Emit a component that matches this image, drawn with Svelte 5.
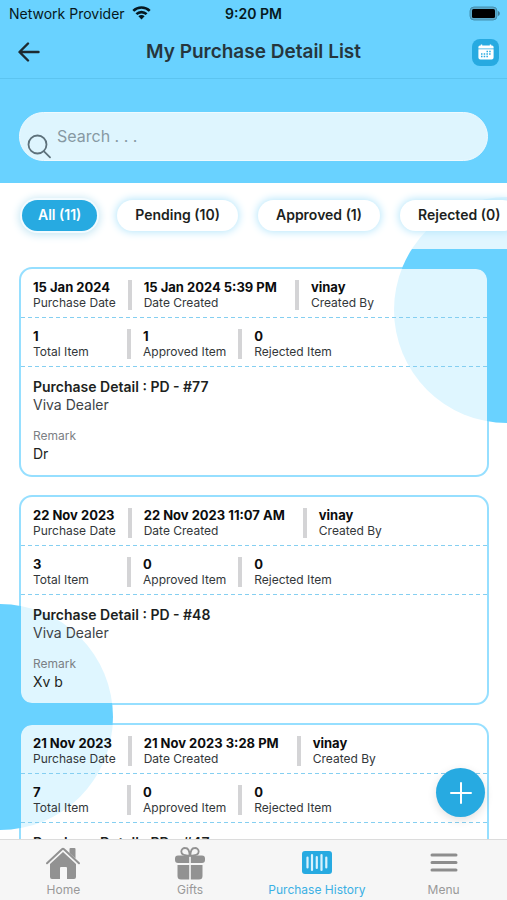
<script>
  const filters = ['All (11)', 'Pending (10)', 'Approved (1)', 'Rejected (0)'];
  const purchases = [
    { id: 77, date: '15 Jan 2024', created: '15 Jan 2024 5:39 PM', by: 'vinay', total: 1, approved: 1, rejected: 0, dealer: 'Viva Dealer', remark: 'Dr' },
    { id: 48, date: '22 Nov 2023', created: '22 Nov 2023 11:07 AM', by: 'vinay', total: 3, approved: 0, rejected: 0, dealer: 'Viva Dealer', remark: 'Xv b' },
    { id: 47, date: '21 Nov 2023', created: '21 Nov 2023 3:28 PM', by: 'vinay', total: 7, approved: 0, rejected: 0 }
  ];
  let active = $state('All (11)');
  let query = $state('');
</script>

<div class="screen">
  <header>
    <div class="status">
      <span class="carrier">Network Provider
        <svg width="19" height="14" viewBox="0 0 19 14" aria-hidden="true">
          <g fill="none" stroke="#061820" stroke-width="2.6">
            <path d="M1.3 4.9a11.6 11.6 0 0 1 16.4 0" />
            <path d="M4.4 8.2a7.2 7.2 0 0 1 10.2 0" />
          </g>
          <path d="M9.5 13.4 6.4 10.3a4.4 4.4 0 0 1 6.2 0z" fill="#061820" />
        </svg>
      </span>
      <span class="time">9:20 PM</span>
      <svg class="battery" width="31" height="15" viewBox="0 0 31 15" aria-hidden="true">
        <rect x="1" y="1" width="27" height="13" rx="4" fill="#5aa9cb" stroke="#4590b0" />
        <rect x="3" y="3" width="23" height="9" rx="1.5" fill="#000" />
        <path d="M29 5c2.400.8 2.400 4.200 0 5z" fill="#3f7f9b" />
      </svg>
    </div>
    <div class="titlebar">
      <button class="icon back" aria-label="Back">
        <svg width="22" height="20" viewBox="0 0 22 20" fill="none" stroke="#1d2a30" stroke-width="2.4" stroke-linecap="round" stroke-linejoin="round">
          <path d="M20.5 10H2M10 1.5 1.5 10l8.5 8.5" />
        </svg>
      </button>
      <h1>My Purchase Detail List</h1>
      <button class="icon calendar" aria-label="Choose dates">
        <svg width="16" height="16" viewBox="0 0 16 16">
          <path d="M2 1.5h.8V.6h1.4v.9h7.6V.6h1.4v.9h.8a1.6 1.6 0 0 1 1.6 1.6V4.5H.4V3.1A1.6 1.6 0 0 1 2 1.5zM.4 5.300h15.200v8.200a2 2 0 0 1-2 2H2.400a2 2 0 0 1-2-2z" fill="#fff" />
          <path d="M8.5 7.5h4.8M3 10h10.3M3 12.5h7.600" stroke="#27aae1" stroke-width="1.3" stroke-dasharray="1.5 1.2" />
        </svg>
      </button>
    </div>
    <div class="searchrow">
      <label class="search">
        <svg width="24" height="25" viewBox="0 0 24 25" fill="none" stroke="#5d717b" stroke-width="1.8" stroke-linecap="round" aria-hidden="true">
          <circle cx="10.5" cy="10.5" r="9" />
          <path d="m17 17.300 6 6" />
        </svg>
        <input type="text" aria-label="Search" placeholder="Search . . ." bind:value={query} />
      </label>
    </div>
  </header>

  <main>
    <div class="blob right"></div>
    <div class="blob left"></div>
    <div class="filters">
      {#each filters as f}
        <button class="pill" class:active={f === active} onclick={() => (active = f)}>{f}</button>
      {/each}
    </div>
    <div class="list">
      {#each purchases as p}
        <article>
          <dl class="row dates">
            <div><dt>Purchase Date</dt><dd>{p.date}</dd></div>
            <div><dt>Date Created</dt><dd>{p.created}</dd></div>
            <div><dt>Created By</dt><dd>{p.by}</dd></div>
          </dl>
          <dl class="row">
            <div><dt>Total Item</dt><dd>{p.total}</dd></div>
            <div><dt>Approved Item</dt><dd>{p.approved}</dd></div>
            <div><dt>Rejected Item</dt><dd>{p.rejected}</dd></div>
          </dl>
          <div class="body">
            <h2>Purchase Detail : PD - #{p.id}</h2>
            {#if p.dealer}
              <p class="dealer">{p.dealer}</p>
            {/if}
            {#if p.remark}
              <p class="caption">Remark</p>
              <p class="remark">{p.remark}</p>
            {/if}
          </div>
        </article>
      {/each}
    </div>
    <button class="fab" aria-label="Add purchase">
      <svg width="22" height="22" viewBox="0 0 22 22" stroke="#fff" stroke-width="2" stroke-linecap="round"><path d="M11 1v20M1 11h20" /></svg>
    </button>
  </main>

  <nav>
    <a href="#home">
      <svg width="36" height="34" viewBox="0 0 36 34" fill="#929292" aria-hidden="true">
        <path d="M18 6 31 18V31a2 2 0 0 1-2 2h-7V22a1 1 0 0 0-1-1h-5a1 1 0 0 0-1 1V33H7a2 2 0 0 1-2-2V18z" />
        <path d="M2 17.300 17 3.200a1.500 1.500 0 0 1 2 0l15 14.100" fill="none" stroke="#929292" stroke-width="2" stroke-linecap="round" />
        <path d="M24.500 3a1 1 0 0 1 1-1h4a1 1 0 0 1 1 1v9.500l-6-5.600z" />
      </svg>
      <span>Home</span>
    </a>
    <a href="#gifts">
      <svg width="32" height="34" viewBox="0 0 32 34" fill="#929292" aria-hidden="true">
        <path d="M15.200 9.500H4a3 3 0 0 0-3 3V14a3 3 0 0 0 3 3h11.200zM16.800 9.500H28a3 3 0 0 1 3 3V14a3 3 0 0 1-3 3H16.800zM15.200 19H3.500v11a3.500 3.500 0 0 0 3.500 3.500h8.200zM16.800 19h11.700v11a3.500 3.500 0 0 1-3.500 3.500h-8.200z" />
        <g fill="none" stroke="#929292" stroke-width="1.8">
          <path d="M15.600 9.800C9 9.800 7.300 7.800 7.300 5.600a3.700 3.700 0 0 1 4-3.600c3 0 4.300 3 4.300 7.800z" />
          <path d="M16.400 9.800c6.600 0 8.300-2 8.300-4.200a3.700 3.700 0 0 0-4-3.600c-3 0-4.300 3-4.300 7.800z" />
        </g>
      </svg>
      <span>Gifts</span>
    </a>
    <a href="#history" class="current" aria-current="page">
      <svg width="32" height="34" viewBox="0 0 32 34" aria-hidden="true">
        <rect x="1" y="5" width="30" height="23" rx="3" fill="#27aae1" />
        <path d="M6.500 11.500v10M11 9v15M15.800 11v11M20.500 9v15M25.300 11.500v10" stroke="#d9f2fd" stroke-width="2.2" stroke-linecap="round" />
      </svg>
      <span>Purchase History</span>
    </a>
    <a href="#menu">
      <svg width="28" height="34" viewBox="0 0 28 34" stroke="#8d8d8d" stroke-width="3" stroke-linecap="round" aria-hidden="true"><path d="M2 9h24M2 16.500h24M2 24h24" /></svg>
      <span>Menu</span>
    </a>
  </nav>
</div>

<style>
  :global(body) { margin: 0; background: #fff; }
  .screen {
    height: 100vh;
    display: flex;
    flex-direction: column;
    overflow: hidden;
    font-family: Inter, Roboto, sans-serif;
    color: #1d1f21;
  }
  button { font: inherit; color: inherit; border: 0; padding: 0; cursor: pointer; }
  h1, h2, p, dl, dd { margin: 0; }
  svg { display: block; flex: none; }

  header { background: #69d2ff; flex: none; }
  .status, .titlebar {
    display: grid;
    grid-template-columns: 1fr auto 1fr;
    align-items: center;
  }
  .status {
    height: 26px;
    padding: 0 7px;
    font-size: 14px;
    color: #061820;
  }
  .carrier { display: flex; align-items: center; gap: 7px; padding-left: 2px; }
  .time { font-weight: 600; }
  .battery { justify-self: end; }
  .titlebar {
    height: 52px;
    padding: 0 8px;
    border-bottom: 1px solid #5cc4f0;
  }
  .icon {
    display: flex;
    align-items: center;
    justify-content: center;
    width: 27px;
    height: 27px;
    background: none;
  }
  .back { width: 41px; }
  .calendar { justify-self: end; background: #27aae1; border-radius: 8px; }
  h1 { font-size: 19px; line-height: 24px; font-weight: 600; color: #26363d; }
  .searchrow { padding: 33px 19px 22px; }
  .search {
    display: flex;
    align-items: center;
    gap: 6px;
    height: 49px;
    box-sizing: border-box;
    padding: 0 20px 0 7px;
    border: 1px solid #eefaff;
    border-radius: 25px;
    background: #def5fe;
  }
  .search svg { align-self: flex-end; margin-bottom: 1px; }
  .search input {
    flex: 1;
    min-width: 0;
    padding: 0 0 2px;
    border: 0;
    outline: 0;
    background: none;
    font: 16px Inter, Roboto, sans-serif;
    color: #26363d;
  }
  .search input::placeholder { color: #8799a3; opacity: 1; }

  main { position: relative; flex: 1; min-height: 0; overflow: hidden; }
  .blob { position: absolute; width: 226px; height: 226px; border-radius: 50%; background: #69d2ff; }
  .right { top: 14px; right: -113px; }
  .left { top: 421px; left: -113px; }
  .filters {
    position: relative;
    display: flex;
    gap: 20px;
    height: 66px;
    box-sizing: border-box;
    padding: 17px 22px 0;
    overflow: hidden;
    background: rgba(255, 255, 255, 0.8);
  }
  .pill {
    flex: none;
    height: 31px;
    padding: 0 18px 2px;
    border-radius: 16px;
    background: #fff;
    box-shadow: 0 0 8px 1px #b5e6fb;
    font-size: 14px;
    font-weight: 600;
    white-space: nowrap;
  }
  .pill.active {
    padding: 0 16px 2px;
    background: #27aae1;
    color: #fff;
    box-shadow: 0 0 0 2px #f2fbff, 0 1px 8px 3px #c5e6f3;
  }

  .list { position: relative; display: flex; flex-direction: column; gap: 18px; padding: 18px 18px 0 19px; }
  article {
    border: 2px solid rgba(105, 210, 255, 0.7);
    border-radius: 13px;
    background: rgba(255, 255, 255, 0.79);
    background-clip: padding-box;
  }
  .row {
    display: flex;
    height: 49px;
    box-sizing: border-box;
    padding: 11px 12px 0;
    background: repeating-linear-gradient(90deg, #85cff1 0 4px, transparent 4px 7px) bottom / 100% 1px no-repeat;
  }
  .row > div { display: flex; flex-direction: column-reverse; justify-content: flex-end; height: 30px; min-width: 82px; }
  .row > div + div { margin-left: 12px; padding-left: 12px; border-left: 4px solid #d4d4d6; }
  .dates > div:nth-child(2) { padding-right: 6px; }
  dt { font-size: 12px; line-height: 15px; color: #33373a; }
  dd { font-size: 13px; line-height: 15px; font-weight: 700; color: #0c0d0e; }
  .body { padding: 10px 12px 11px; }
  h2 { font-size: 14px; line-height: 19px; font-weight: 600; }
  .dealer { font-size: 14px; line-height: 18px; color: #404447; }
  .caption { margin-top: 13px; font-size: 12px; line-height: 17px; color: #7b8084; }
  .remark { font-size: 14px; line-height: 20px; }

  .fab {
    position: absolute;
    right: 22px;
    bottom: 22px;
    width: 49px;
    height: 49px;
    display: flex;
    align-items: center;
    justify-content: center;
    border-radius: 50%;
    background: #27aae1;
    box-shadow: 0 3px 10px rgba(0, 0, 0, 0.12);
  }

  nav {
    flex: none;
    display: grid;
    grid-template-columns: repeat(4, 1fr);
    height: 61px;
    box-sizing: border-box;
    padding-top: 6px;
    border-top: 1px solid #dcdcdc;
    background: #f6f6f6;
  }
  nav a {
    display: flex;
    flex-direction: column;
    align-items: center;
    gap: 2px;
    font-size: 12px;
    line-height: 15px;
    color: #999;
    text-decoration: none;
    white-space: nowrap;
  }
  nav .current { color: #3bb0e4; }
</style>
